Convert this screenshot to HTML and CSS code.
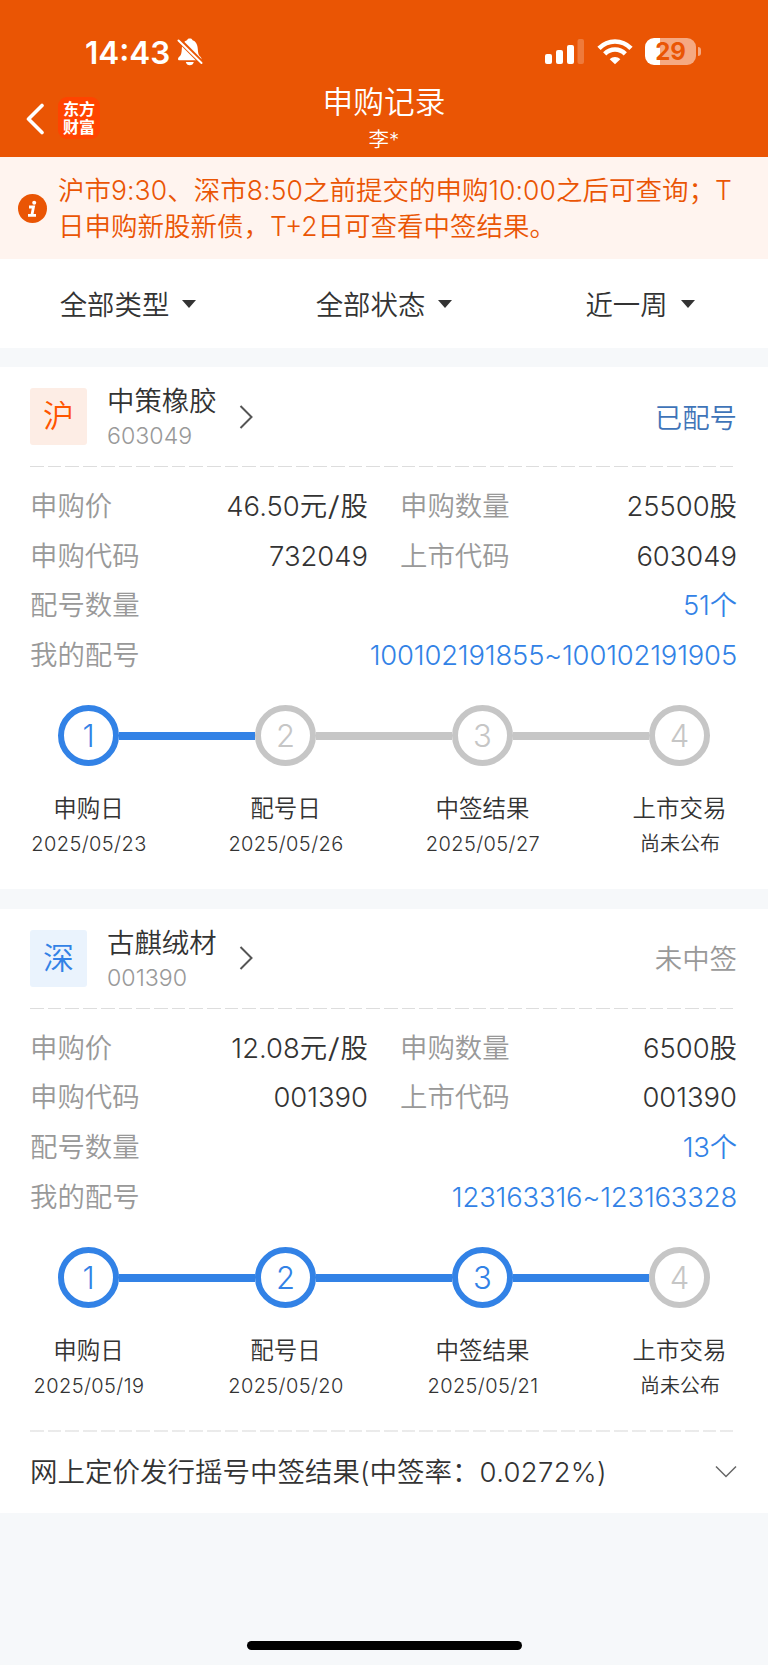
FILE: index.html
```html
<!DOCTYPE html>
<html lang="zh-CN">
<head>
  <meta charset="utf-8">
  <title>申购记录</title>
  <link rel="stylesheet" href="styles.css">
</head>
<body>
  <header class="header">
    <div class="statusbar">
      <div class="clock">14:43</div>
      <svg class="bell" width="26" height="28" viewBox="0 0 26 28">
        <path fill="#fff" d="M1 21c0-1 .6-1.800 1.500-2.600C4.300 16.800 4.600 15 4.800 11 5 6.500 7 3.200 10 2.300 10.500.9 11.600.5 12.800.5s2.300.4 2.800 1.800c3 .9 5 4.200 5.200 8.700.2 4 .5 5.800 2.300 7.400.9.800 1.400 1.600 1.400 2.600 0 .8-.5 1.300-1.500 1.300H2.500C1.500 22.300 1 21.800 1 21zM8.800 24h8c-.4 2-2 3.300-4 3.300S9.200 26 8.800 24z"/>
        <path stroke="#ea5504" stroke-width="5" d="M1 1l25 25"/>
        <path stroke="#fff" stroke-width="2" stroke-linecap="round" d="M1.500 2.500l23 22.500"/>
      </svg>
      <svg class="signal" width="40" height="26" viewBox="0 0 40 26">
        <g fill="#fff">
          <rect x="0" y="15" width="7" height="10" rx="2"/>
          <rect x="11" y="11" width="7" height="14" rx="2"/>
          <rect x="22" y="6" width="7" height="19" rx="2"/>
          <rect x="32.500" y="0" width="6.500" height="25" rx="2" opacity=".22"/>
        </g>
      </svg>
      <svg class="wifi" width="36" height="26" viewBox="0 0 36 26">
        <g fill="none" stroke="#fff" stroke-width="4.600">
          <path d="M2 9.300C11 .2 25 .2 34 9.300"/>
          <path d="M7.700 14.800c6-5.800 14.600-5.800 20.600 0"/>
        </g>
        <path fill="#fff" d="M18 25.300l-5.300-5.100c3-2.800 7.600-2.800 10.600 0z"/>
      </svg>
      <div class="battery">29</div>
      <div class="battery-tip"></div>
    </div>
    <div class="navbar">
      <div class="nav-left">
        <svg width="20" height="32" viewBox="0 0 20 32">
          <path fill="none" stroke="#fff" stroke-width="3.600" stroke-linecap="round" stroke-linejoin="round" d="M17 2.500L3.500 16 17 29.500"/>
        </svg>
        <div class="logo">东方<br>财富</div>
      </div>
      <div class="nav-title">
        <h1>申购记录</h1>
        <p>李*</p>
      </div>
      <div></div>
    </div>
  </header>

  <div class="notice">
    <svg width="29" height="29" viewBox="0 0 29 29">
      <circle cx="14.500" cy="14.500" r="14.500" fill="#ea5504"/>
      <circle cx="16.200" cy="8.800" r="2" fill="#fff"/>
      <path fill="none" stroke="#fff" stroke-width="2.800" d="M11 13h4.500l-1.700 8.500M10 21.300h8"/>
    </svg>
    <p>沪市<span class="n">9:30</span>、深市<span class="n">8:50</span>之前提交的申购<span class="n">10:00</span>之后可查询；T<br>日申购新股新债，T+2日可查看中签结果。</p>
  </div>

  <nav class="filters">
    <div class="filter">全部类型<i class="caret"></i></div>
    <div class="filter">全部状态<i class="caret"></i></div>
    <div class="filter">近一周<i class="caret"></i></div>
  </nav>

  <section class="card">
    <div class="card-head">
      <div class="market sh">沪</div>
      <div class="stock">
        <div class="stock-name">中策橡胶</div>
        <div class="stock-code">603049</div>
      </div>
      <svg class="arrow" width="14" height="26" viewBox="0 0 14 26"><path d="M1.500 2l11 11-11 11"/></svg>
      <div class="state allotted">已配号</div>
    </div>
    <div class="dashed"></div>
    <div class="info">
      <div class="pair"><label>申购价</label><span>46.50元<i class="slash">/</i>股</span></div>
      <div class="pair"><label>申购数量</label><span>25500股</span></div>
      <div class="pair"><label>申购代码</label><span>732049</span></div>
      <div class="pair"><label>上市代码</label><span>603049</span></div>
      <div class="pair wide"><label>配号数量</label><span>51个</span></div>
      <div class="pair wide"><label>我的配号</label><span>100102191855~100102191905</span></div>
    </div>
    <div class="rings">
      <div class="ring done">1</div><div class="bar done"></div>
      <div class="ring">2</div><div class="bar"></div>
      <div class="ring">3</div><div class="bar"></div>
      <div class="ring">4</div>
    </div>
    <div class="steps">
      <div><b>申购日</b><span>2025/05/23</span></div>
      <div><b>配号日</b><span>2025/05/26</span></div>
      <div><b>中签结果</b><span>2025/05/27</span></div>
      <div><b>上市交易</b><span class="cn">尚未公布</span></div>
    </div>
  </section>

  <section class="card">
    <div class="card-head">
      <div class="market sz">深</div>
      <div class="stock">
        <div class="stock-name">古麒绒材</div>
        <div class="stock-code">001390</div>
      </div>
      <svg class="arrow" width="14" height="26" viewBox="0 0 14 26"><path d="M1.500 2l11 11-11 11"/></svg>
      <div class="state">未中签</div>
    </div>
    <div class="dashed"></div>
    <div class="info">
      <div class="pair"><label>申购价</label><span>12.08元<i class="slash">/</i>股</span></div>
      <div class="pair"><label>申购数量</label><span>6500股</span></div>
      <div class="pair"><label>申购代码</label><span>001390</span></div>
      <div class="pair"><label>上市代码</label><span>001390</span></div>
      <div class="pair wide"><label>配号数量</label><span>13个</span></div>
      <div class="pair wide"><label>我的配号</label><span>123163316~123163328</span></div>
    </div>
    <div class="rings">
      <div class="ring done">1</div><div class="bar done"></div>
      <div class="ring done">2</div><div class="bar done"></div>
      <div class="ring done">3</div><div class="bar done"></div>
      <div class="ring">4</div>
    </div>
    <div class="steps">
      <div><b>申购日</b><span>2025/05/19</span></div>
      <div><b>配号日</b><span>2025/05/20</span></div>
      <div><b>中签结果</b><span>2025/05/21</span></div>
      <div><b>上市交易</b><span class="cn">尚未公布</span></div>
    </div>
    <div class="dashed light"></div>
    <div class="result">
      <span>网上定价发行摇号中签结果(中签率：<span class="rate">0.0272%)</span></span>
      <svg width="22" height="14" viewBox="0 0 22 14"><path d="M1 1.500l10 10 10-10"/></svg>
    </div>
  </section>

  <div class="home"></div>
</body>
</html>
```
FILE: styles.css
```css
* {
  box-sizing: border-box;
  margin: 0;
  padding: 0;
}
body {
  height: 1665px;
  display: flex;
  flex-direction: column;
  overflow: hidden;
  background: #f6f8fa;
  color: #333;
  font-family: Inter, "Noto Sans CJK SC", sans-serif;
  font-weight: 350;
  font-size: 27.4px;
  line-height: 36px;
}

/* header */
.header {
  height: 157px;
  background: #ea5504;
  color: #fff;
}
.statusbar {
  height: 84px;
  display: flex;
  align-items: center;
  padding: 19px 67px 0 85px;
}
.clock {
  width: 85px;
  padding-top: 2px;
  font-size: 31.5px;
  font-weight: 600;
  white-space: nowrap;
}
.bell {
  margin-left: 7px;
}
.signal {
  margin-left: auto;
}
.wifi {
  margin-left: 12px;
}
.battery {
  width: 51px;
  height: 27px;
  margin-left: 12px;
  border-radius: 9px;
  background: linear-gradient(to right, #fff 15px, #f5a982 15px);
  color: #ea5504;
  font-size: 24px;
  font-weight: 700;
  line-height: 27px;
  text-align: center;
}
.battery-tip {
  width: 3px;
  height: 9px;
  margin-left: 2px;
  border-radius: 0 4px 4px 0;
  background: #f5a982;
}
.navbar {
  height: 73px;
  display: grid;
  grid-template-columns: 1fr auto 1fr;
}
.nav-left {
  display: flex;
  padding: 13px 0 0 25px;
  align-items: flex-start;
}
.nav-left svg {
  margin-top: 6px;
}
.logo {
  width: 42px;
  height: 42px;
  margin-left: 13px;
  padding-top: 3px;
  border-radius: 9px;
  background: #ff4400;
  font-size: 16px;
  font-weight: 700;
  line-height: 18px;
  text-align: center;
}
.nav-title {
  text-align: center;
}
.nav-title h1 {
  font-size: 30.7px;
  font-weight: 350;
  line-height: 36px;
}
.nav-title p {
  font-size: 20.5px;
  line-height: 40px;
}

/* notice */
.notice {
  height: 102px;
  display: flex;
  align-items: center;
  padding: 0 0 0 18px;
  background: #fff4ef;
  color: #ea5504;
}
.notice p {
  margin-left: 11px;
  font-size: 26.500px;
  white-space: nowrap;
}
.n {
  letter-spacing: 0.1px;
}

/* filters */
.filters {
  height: 89px;
  display: grid;
  grid-template-columns: repeat(3, 256px);
  background: #fff;
}
.filter {
  display: flex;
  align-items: center;
  justify-content: center;
  padding-top: 2px;
}
.caret {
  margin: -2px 0 0 13px;
  border: 7px solid transparent;
  border-top: 8px solid #333;
  border-bottom: 0;
}

/* cards */
.card {
  margin-top: 19px;
  padding: 0 31px 29px 30px;
  background: #fff;
}
.card + .card {
  margin-top: 20px;
  padding-bottom: 0;
}
.card-head {
  height: 99px;
  display: flex;
  align-items: center;
}
.market {
  width: 57px;
  height: 57px;
  border-radius: 3px;
  font-size: 31px;
  line-height: 55px;
  text-align: center;
}
.sh {
  background: #fdede5;
  color: #ff5500;
}
.sz {
  background: #eaf3fd;
  color: #3282e6;
}
.stock {
  width: 109px;
  margin-left: 20px;
  padding-top: 3px;
  white-space: nowrap;
}
.stock-code {
  color: #999;
  font-size: 23.2px;
  line-height: 34px;
}
.arrow {
  margin-left: 23px;
}
.arrow path {
  fill: none;
  stroke: #555;
  stroke-width: 2;
}
.state {
  margin-left: auto;
  padding-top: 2px;
  color: #999;
}
.allotted {
  color: #3f74b8;
}
.dashed {
  height: 1px;
  margin-right: 4px;
  background: repeating-linear-gradient(to right, #ddd 0, #ddd 13.700px, transparent 13.700px, transparent 17.700px);
}
.dashed.light {
  height: 2px;
  margin-top: 28px;
  opacity: .6;
}
.info {
  display: grid;
  grid-template-columns: 338px 337px;
  column-gap: 32px;
  padding-top: 14px;
}
.pair {
  height: 49.700px;
  display: flex;
  align-items: center;
  justify-content: space-between;
}
.pair label {
  color: #999;
}
.slash {
  display: inline-block;
  padding: 0 2px;
  font-style: normal;
  transform: scaleX(1.3);
}
.wide {
  grid-column: 1 / 3;
}
.wide span {
  color: #3282e6;
  letter-spacing: -0.15px;
}

/* progress */
.rings {
  display: flex;
  align-items: center;
  margin: 25px 27px 0 28px;
}
.ring {
  width: 61px;
  height: 61px;
  border: 6px solid #c6c6c6;
  border-radius: 50%;
  color: #c6c6c6;
  font-size: 31px;
  font-weight: 300;
  line-height: 49px;
  text-align: center;
}
.bar {
  flex: 1;
  height: 8px;
  margin-top: 1px;
  background: #c6c6c6;
}
.ring.done {
  border-color: #3282e6;
  color: #3282e6;
}
.bar.done {
  background: #3282e6;
}
.steps {
  display: grid;
  grid-template-columns: repeat(4, 197px);
  margin: 25px 0 -1px -40px;
  text-align: center;
}
.steps b {
  display: block;
  font-size: 23.5px;
  font-weight: 350;
}
.steps span {
  display: block;
  padding-left: 1px;
  font-size: 20px;
  letter-spacing: 0.4px;
  line-height: 34px;
}
.steps .cn {
  letter-spacing: 0;
}
.result {
  height: 81px;
  display: flex;
  align-items: center;
  justify-content: space-between;
  padding-bottom: 1px;
}
.result > span {
  font-size: 27.5px;
}
.rate {
  letter-spacing: 0.3px;
}
.result path {
  fill: none;
  stroke: #666;
  stroke-width: 1.5;
}

.home {
  width: 275px;
  height: 9px;
  margin: auto auto 15px;
  border-radius: 5px;
  background: #000;
}
```
